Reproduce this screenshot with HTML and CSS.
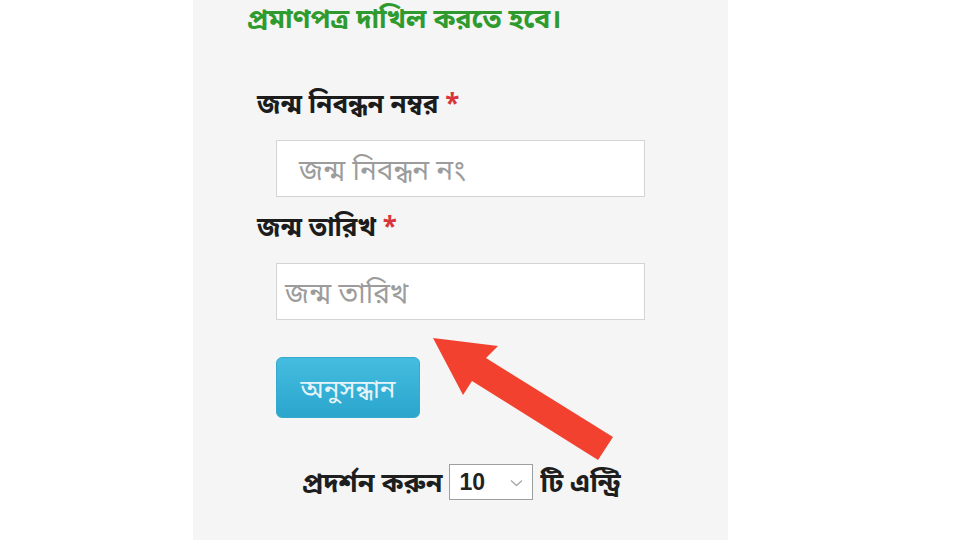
FILE: index.html
```html
<!DOCTYPE html>
<html lang="bn">
<head>
<meta charset="utf-8">
<link rel="stylesheet" href="styles.css">
</head>
<body>
<div class="page">
  <div class="panel">
    <p class="notice">প্রমাণপত্র দাখিল করতে হবে।</p>
    <div class="form">
      <div class="label">জন্ম নিবন্ধন নম্বর <span class="req">*</span></div>
      <div class="input"><span class="ph ph1">জন্ম নিবন্ধন নং</span></div>
      <div class="label label2">জন্ম তারিখ <span class="req">*</span></div>
      <div class="input input2"><span class="ph">জন্ম তারিখ</span></div>
      <div class="btn">অনুসন্ধান</div>
      <div class="entries">
        <span class="etext">প্রদর্শন করুন</span>
        <span class="select"><span class="num">10</span><svg class="chev" width="13" height="8" viewBox="0 0 13 8"><path d="M1 1.5 L6.5 6.5 L12 1.5" fill="none" stroke="#a8a8a8" stroke-width="1.3"/></svg></span>
        <span class="etext">টি এন্ট্রি</span>
      </div>
    </div>
  </div>
  <svg class="arrow" width="960" height="540" viewBox="0 0 960 540">
    <polygon points="433,338 498,346 486,358 613,437 598,460 472,381 463,395" fill="#f3412f"/>
  </svg>
</div>
</body>
</html>
```
FILE: styles.css
```css
html, body {
  margin: 0;
  padding: 0;
  background: #ffffff;
}
body {
  font-family: "Noto Sans", "Noto Sans Bengali", "Lohit Bengali", "FreeSans", sans-serif;
}
.page {
  position: relative;
  width: 960px;
  height: 540px;
  overflow: hidden;
}
.panel {
  width: 535px;
  height: 540px;
  margin-left: 193px;
  background: #f5f5f5;
  padding-top: 2px;
  box-sizing: border-box;
}
.notice {
  margin: 0 0 0 54px;
  color: #2f9b2f;
  font-size: 27px;
  font-weight: bold;
  line-height: 32px;
  height: 32px;
  white-space: nowrap;
}
.form {
  padding-left: 64px;
  padding-top: 54px;
}
.label {
  font-size: 26px;
  font-weight: bold;
  color: #1c1c1c;
  line-height: 30px;
  height: 30px;
  white-space: nowrap;
}
.req {
  color: #d9343c;
}
.input {
  margin: 22px 0 0 19px;
  width: 369px;
  height: 57px;
  background: #ffffff;
  border: 1.5px solid #d4d4d4;
  box-sizing: border-box;
  display: flex;
  align-items: center;
  padding-left: 8px;
}
.ph {
  color: #9c9c9c;
  font-size: 28px;
  line-height: 32px;
  white-space: nowrap;
}
.ph1 {
  padding-left: 14px;
}
.label2 {
  margin-top: 14px;
}
.btn {
  margin: 37px 0 0 19px;
  width: 144px;
  height: 61px;
  border-radius: 6px;
  background: linear-gradient(#45bde0, #2aa5cc);
  color: #e6f4fa;
  font-size: 26px;
  line-height: 30px;
  display: flex;
  align-items: center;
  justify-content: center;
  box-sizing: border-box;
  border: 1px solid #38a9cc;
}
.entries {
  margin: 44px 0 0 45px;
  display: flex;
  align-items: center;
  gap: 7px;
  height: 39px;
}
.etext {
  font-size: 27px;
  font-weight: bold;
  color: #1e1e1e;
  line-height: 30px;
  white-space: nowrap;
}
.select {
  width: 84px;
  height: 36px;
  background: #ffffff;
  border: 1.5px solid #9e9e9e;
  box-sizing: border-box;
  display: flex;
  align-items: center;
  padding-left: 9px;
  gap: 25px;
}
.num {
  font-family: "Liberation Sans", Arial, sans-serif;
  font-size: 23px;
  font-weight: bold;
  line-height: 28px;
  color: #222222;
}
.chev {
  margin-top: 2px;
}
.arrow {
  position: absolute;
  left: 0;
  top: 0;
}
```
